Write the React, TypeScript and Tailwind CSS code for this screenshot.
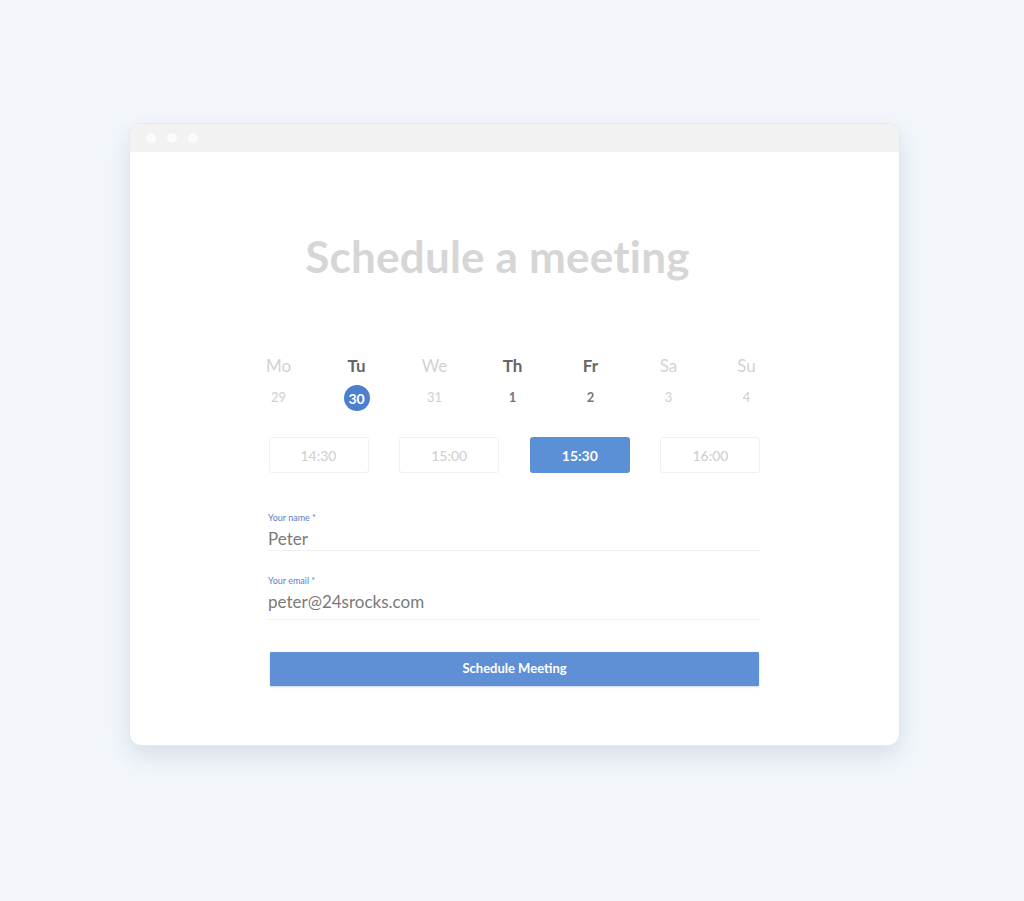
import React from "react";

const days = [
  { d: "Mo", n: "29", active: false },
  { d: "Tu", n: "30", active: true, selected: true },
  { d: "We", n: "31", active: false },
  { d: "Th", n: "1", active: true },
  { d: "Fr", n: "2", active: true },
  { d: "Sa", n: "3", active: false },
  { d: "Su", n: "4", active: false },
];

const slots = ["14:30", "15:00", "15:30", "16:00"];

export default function App() {
  return (
    <div
      className="w-[1024px] h-[901px] bg-[#f3f7fc] pt-[123px] pl-[129px]"
      style={{ fontFamily: "Lato, 'Open Sans', sans-serif" }}
    >
      <div className="w-[771px] h-[623px] bg-white rounded-[12px] border border-[#e3e7ee] shadow-[0_10px_24px_rgba(160,175,195,0.35)] overflow-hidden flex flex-col">
        <div className="h-[28px] bg-[#f2f2f3] flex items-center gap-[11px] pl-[16px] shrink-0">
          <div className="w-[10px] h-[10px] rounded-full bg-[#fbfbfb]" />
          <div className="w-[10px] h-[10px] rounded-full bg-[#fbfbfb]" />
          <div className="w-[10px] h-[10px] rounded-full bg-[#fbfbfb]" />
        </div>
        <div className="flex flex-col items-center">
          <h1 className="mt-[76px] text-[44px] leading-[56px] font-bold text-[#d6d6d6] tracking-[0.2px] -translate-x-[17px]">
            Schedule a meeting
          </h1>
          <div className="mt-[70px] grid grid-cols-7 w-[546px] -translate-x-[2px]">
            {days.map((x) => (
              <div key={x.d} className="flex flex-col items-center">
                <div
                  className={
                    "text-[17px] leading-[24px] " +
                    (x.active ? "text-[#666] font-bold" : "text-[#d2d2d2]")
                  }
                >
                  {x.d}
                </div>
                <div className="mt-[6px] h-[28px] flex items-center justify-center">
                  {x.selected ? (
                    <div className="w-[26px] h-[26px] rounded-full bg-[#4c7fcd] text-white text-[14px] font-bold flex items-center justify-center">
                      {x.n}
                    </div>
                  ) : (
                    <div
                      className={
                        "text-[13px] " +
                        (x.active ? "text-[#777] font-bold" : "text-[#cfcfcf]")
                      }
                    >
                      {x.n}
                    </div>
                  )}
                </div>
              </div>
            ))}
          </div>
          <div className="mt-[25px] w-[492px] flex justify-between">
            {slots.map((s) => (
              <div
                key={s}
                className={
                  "w-[100px] h-[36px] rounded-[3px] flex items-center justify-center text-[14px] " +
                  (s === "15:30"
                    ? "bg-[#5b8fd6] text-white font-bold"
                    : "border border-[#f0f0f0] text-[#cdcdcd]")
                }
              >
                {s}
              </div>
            ))}
          </div>
          <div className="mt-[39px] w-[493px] flex flex-col">
            <div className="text-[9px] leading-[12px] text-[#5a80c8]">Your name *</div>
            <div className="text-[17px] leading-[22px] text-[#7a7a7a] mt-[4px]">Peter</div>
            <div className="h-px bg-[#f0f0f0] mt-[0px]" />
            <div className="mt-[24px] text-[9px] leading-[12px] text-[#5a80c8]">Your email *</div>
            <div className="text-[17px] leading-[22px] text-[#7a7a7a] mt-[4px]">peter@24srocks.com</div>
            <div className="h-px bg-[#f0f0f0] mt-[6px]" />
          </div>
          <button className="mt-[32px] w-[489px] h-[34px] bg-[#5f8fd5] text-white text-[13px] font-bold rounded-[1px] shadow-[0_1px_2px_rgba(80,110,160,0.3)]">
            Schedule Meeting
          </button>
        </div>
      </div>
    </div>
  );
}
